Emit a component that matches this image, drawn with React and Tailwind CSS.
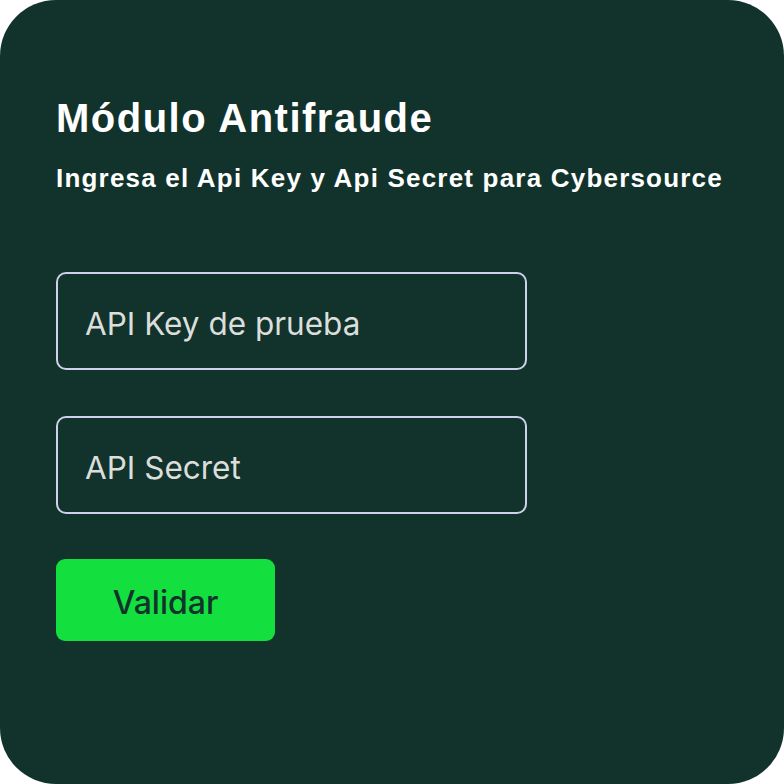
import { useState } from 'react'

export default function App() {
  const [apiKey, setApiKey] = useState('')
  const [apiSecret, setApiSecret] = useState('')

  return (
    <div className="w-[784px] h-[784px] bg-white">
      <div className="w-full h-full rounded-[56px] bg-[#12332b] px-[56px] pt-[98px]" style={{ fontFamily: '"Liberation Sans", Arial, sans-serif' }}>
        <h1 className="text-[40px] leading-[40px] tracking-[1.5px] font-bold text-white">Módulo Antifraude</h1>
        <p className="mt-[27px] text-[26px] leading-[26px] tracking-[1.2px] font-bold text-white">Ingresa el Api Key y Api Secret para Cybersource</p>

        <div className="mt-[81px] flex flex-col gap-[46px]" style={{ fontFamily: 'Inter, "Noto Sans", sans-serif' }}>
          <input value={apiKey} onChange={e => setApiKey(e.target.value)}
            placeholder="API Key de prueba"
            className="w-[471px] h-[98px] pl-[27px] pr-4 pt-[5px] rounded-[10px] border-2 border-[#cdd1ec] bg-transparent text-[31.5px] text-[#dcdedc] placeholder:text-[#dcdedc] focus:outline-none" />
          <input value={apiSecret} onChange={e => setApiSecret(e.target.value)}
            placeholder="API Secret"
            className="w-[471px] h-[98px] pl-[27px] pr-4 pt-[5px] rounded-[10px] border-2 border-[#cdd1ec] bg-transparent text-[31.5px] text-[#dcdedc] placeholder:text-[#dcdedc] focus:outline-none" />
        </div>

        <button className="mt-[45px] w-[219px] h-[82px] pt-[6px] rounded-[9px] bg-[#13df3f] text-[32px] font-medium text-[#12332b]"
          style={{ fontFamily: 'Inter, "Noto Sans", sans-serif' }}>
          Validar
        </button>
      </div>
    </div>
  )
}
